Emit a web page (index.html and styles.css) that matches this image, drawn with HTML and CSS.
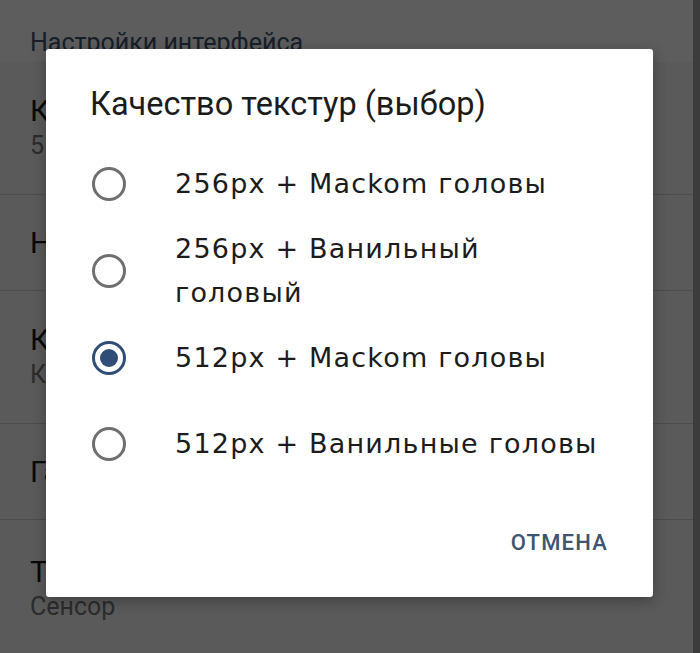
FILE: index.html
```html
<!DOCTYPE html>
<html lang="ru">
<head>
<meta charset="utf-8">
<title>Качество текстур</title>
<link rel="stylesheet" href="styles.css">
</head>
<body>
<div class="screen">
  <div class="settings">
    <div class="section-head">Настройки интерфейса</div>
    <div class="row row-tall">
      <div class="row-title">Качество текстур</div>
      <div class="row-sub">512px + Маском головы</div>
    </div>
    <div class="row">
      <div class="row-title">Настройки интерфейса</div>
    </div>
    <div class="row row-tall">
      <div class="row-title">Клавиатура</div>
      <div class="row-sub">Клавиатура</div>
    </div>
    <div class="row">
      <div class="row-title">Галерея</div>
    </div>
    <div class="row row-last">
      <div class="row-title">Тип управления</div>
      <div class="row-sub">Сенсор</div>
    </div>
  </div>
  <div class="edge"></div>
</div>

<div class="overlay">
  <div class="dialog">
    <div class="dialog-title">Качество текстур (выбор)</div>
    <div class="options">
      <div class="option">
        <svg class="radio" viewBox="0 0 34 34" width="34" height="34"><circle cx="17" cy="17" r="15.5" fill="none" stroke="#6f6f6f" stroke-width="3"/></svg>
        <span class="option-text">256px + Mackom головы</span>
      </div>
      <div class="option">
        <svg class="radio" viewBox="0 0 34 34" width="34" height="34"><circle cx="17" cy="17" r="15.5" fill="none" stroke="#6f6f6f" stroke-width="3"/></svg>
        <span class="option-text">256px + Ванильный<br>головый</span>
      </div>
      <div class="option">
        <svg class="radio" viewBox="0 0 34 34" width="34" height="34"><circle cx="17" cy="17" r="15.5" fill="none" stroke="#2f4d76" stroke-width="3"/><circle cx="17" cy="17" r="9" fill="#2f4d76"/></svg>
        <span class="option-text">512px + Mackom головы</span>
      </div>
      <div class="option">
        <svg class="radio" viewBox="0 0 34 34" width="34" height="34"><circle cx="17" cy="17" r="15.5" fill="none" stroke="#6f6f6f" stroke-width="3"/></svg>
        <span class="option-text">512px + Ванильные головы</span>
      </div>
    </div>
    <div class="actions">
      <span class="btn">ОТМЕНА</span>
    </div>
  </div>
</div>
</body>
</html>
```

FILE: styles.css
```css
html, body {
  margin: 0;
  padding: 0;
}

body {
  width: 700px;
  height: 653px;
  overflow: hidden;
  position: relative;
  font-family: Roboto, "Noto Sans", sans-serif;
  background: #f4f4f4;
}

.screen {
  display: flex;
  height: 653px;
}

.settings {
  flex: 1;
  display: flex;
  flex-direction: column;
}

.edge {
  width: 7px;
  background: #a4a4a4;
}

.section-head {
  height: 62px;
  box-sizing: border-box;
  padding: 28px 0 0 30px;
  font-size: 25px;
  line-height: 30px;
  color: #3d5571;
  background: #fbfbfb;
  white-space: nowrap;
  overflow: hidden;
}

.row {
  height: 96px;
  box-sizing: border-box;
  padding: 0 30px;
  display: flex;
  flex-direction: column;
  justify-content: center;
  border-bottom: 1px solid #d2d2d2;
}

.row-tall {
  height: 133px;
}

.row-last {
  flex: 1;
  border-bottom: none;
  justify-content: flex-start;
  padding-top: 34px;
}

.row-title {
  font-size: 30px;
  line-height: 36px;
  color: #1a1a1a;
  white-space: nowrap;
}

.row-sub {
  font-size: 25px;
  line-height: 34px;
  color: #777;
  white-space: nowrap;
}

.overlay {
  position: absolute;
  inset: 0;
  background: rgba(0, 0, 0, 0.63);
}

.dialog {
  position: absolute;
  left: 46px;
  top: 49px;
  width: 607px;
  height: 548px;
  box-sizing: border-box;
  background: #ffffff;
  border-radius: 3px;
  box-shadow: 0 4px 14px rgba(0, 0, 0, 0.3);
  display: flex;
  flex-direction: column;
  padding-top: 37px;
}

.dialog-title {
  padding-left: 44px;
  font-size: 32.5px;
  line-height: 36px;
  color: #1b1b1b;
  margin-bottom: 19px;
}

.options {
  display: flex;
  flex-direction: column;
}

.option {
  min-height: 86px;
  display: flex;
  align-items: center;
  padding-left: 46px;
}

.radio {
  flex: none;
  margin-right: 49px;
}

.option-text {
  font-family: "DejaVu Sans", "Open Sans", sans-serif;
  font-size: 27px;
  line-height: 44px;
  color: #1c1c1c;
  letter-spacing: 1.2px;
}

.actions {
  display: flex;
  justify-content: flex-end;
  padding: 38px 45px 0 0;
}

.btn {
  font-family: Roboto, sans-serif;
  font-weight: 500;
  font-size: 22px;
  line-height: 36px;
  letter-spacing: 1.2px;
  color: #3d5571;
}
```
